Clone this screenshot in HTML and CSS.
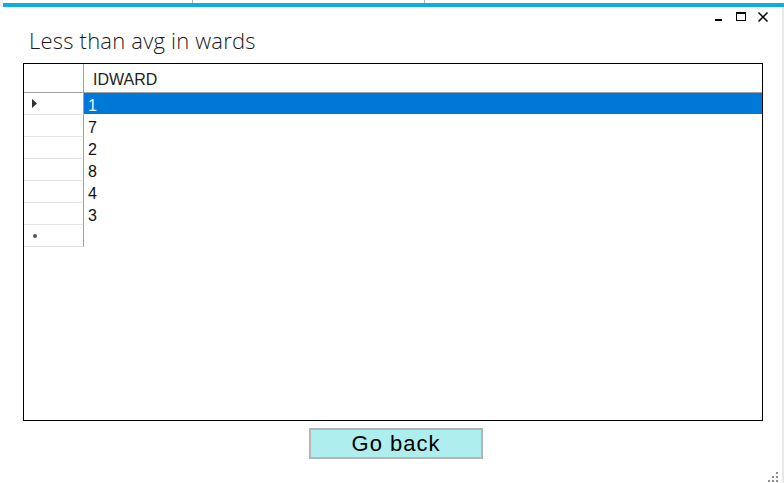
FILE: index.html
```html
<!DOCTYPE html>
<html>
<head>
<meta charset="utf-8">
<link rel="stylesheet" href="styles.css">
</head>
<body>
<div class="screen">
  <div class="topstrip"></div>
  <div class="titlebar"></div>
  <div class="frame">
    <div class="window">
      <div class="controls">
        <svg class="ctl" width="12" height="12" viewBox="0 0 12 12"><rect x="2" y="8" width="7" height="2" fill="#000"/></svg>
        <svg class="ctl" width="12" height="12" viewBox="0 0 12 12"><rect x="1.5" y="1.5" width="9" height="8" fill="none" stroke="#000" stroke-width="1"/><rect x="1" y="1" width="10" height="2" fill="#000"/></svg>
        <svg class="ctl" width="12" height="12" viewBox="0 0 12 12"><path d="M1.5 1.5 L10.5 10.5 M10.5 1.5 L1.5 10.5" stroke="#000" stroke-width="1.5"/></svg>
      </div>
      <h1 class="title">Less than avg in wards</h1>
      <div class="grid">
        <div class="row head">
          <div class="rh"></div>
          <div class="cell">IDWARD</div>
        </div>
        <div class="row selected">
          <div class="rh"><svg width="6" height="9" viewBox="0 0 6 9"><path d="M0 0 L5 4.5 L0 9 Z" fill="#333"/></svg></div>
          <div class="cell">1</div>
        </div>
        <div class="row"><div class="rh"></div><div class="cell">7</div></div>
        <div class="row"><div class="rh"></div><div class="cell">2</div></div>
        <div class="row"><div class="rh"></div><div class="cell">8</div></div>
        <div class="row"><div class="rh"></div><div class="cell">4</div></div>
        <div class="row"><div class="rh"></div><div class="cell">3</div></div>
        <div class="row newrow"><div class="rh"><span class="dot"></span></div><div class="cell"></div></div>
      </div>
      <div class="actions">
        <button class="btn">Go back</button>
      </div>
      <div class="grip">
        <svg width="12" height="12" viewBox="0 0 12 12" fill="#8f8f8f">
          <rect x="9" y="1" width="2" height="2"/>
          <rect x="5" y="5" width="2" height="2"/><rect x="9" y="5" width="2" height="2"/>
          <rect x="1" y="9" width="2" height="2"/><rect x="5" y="9" width="2" height="2"/><rect x="9" y="9" width="2" height="2"/>
        </svg>
      </div>
    </div>
    <div class="edge"></div>
  </div>
</div>
</body>
</html>
```
FILE: styles.css
```css
html, body {
  margin: 0;
  padding: 0;
  background: #ffffff;
}
.screen {
  width: 784px;
  height: 483px;
  overflow: hidden;
  display: flex;
  flex-direction: column;
  background:
    linear-gradient(#f0f0f0, #f0f0f0) 0 0 / 3px 15px no-repeat,
    #ffffff;
}
.topstrip {
  height: 3px;
  background:
    linear-gradient(#b5b5b5, #b5b5b5) 192px 0 / 1px 3px no-repeat,
    linear-gradient(#b5b5b5, #b5b5b5) 424px 0 / 1px 3px no-repeat;
}
.titlebar {
  height: 5px;
  margin-left: 3px;
  background: #0aaedc;
}
.frame {
  flex: 1;
  display: flex;
}
.window {
  flex: 1;
  display: flex;
  flex-direction: column;
  background: #ffffff;
}
.edge {
  width: 2px;
  background: #e8e8e8;
}
.controls {
  height: 21px;
  display: flex;
  justify-content: flex-end;
  align-items: flex-start;
  gap: 10px;
  padding: 4px 13px 0 0;
  box-sizing: border-box;
}
.ctl { display: block; }
.title {
  margin: 0;
  height: 35px;
  padding-left: 29px;
  font-family: "Open Sans", sans-serif;
  font-weight: 300;
  font-size: 22px;
  letter-spacing: 0.2px;
  line-height: 24px;
  color: #1a1a1a;
}
.grid {
  margin-left: 23px;
  width: 740px;
  height: 358px;
  border: 1px solid #000;
  box-sizing: border-box;
  font-family: "Liberation Sans", sans-serif;
  display: flex;
  flex-direction: column;
}
.row {
  display: flex;
  height: 22px;
}
.rh {
  width: 60px;
  box-sizing: border-box;
  border-right: 1px solid #a0a0a0;
  border-bottom: 1px solid #e3e3e3;
  display: flex;
  align-items: center;
  padding-left: 8px;
}
.cell {
  flex: 1;
  box-sizing: border-box;
  padding: 4px 0 0 4px;
  font-size: 16px;
  line-height: 17px;
  color: #111;
  border-bottom: 1px solid transparent;
}
.head {
  height: 29px;
}
.head .rh {
  border-bottom: 1px solid #a0a0a0;
}
.head .cell {
  border-bottom: 1px solid #a0a0a0;
  font-size: 16px;
  padding: 7px 0 0 9px;
  color: #222;
}
.selected .cell {
  background: #0078d7;
  background-clip: padding-box;
  color: #e8f4ff;
}
.dot {
  width: 4px;
  height: 4px;
  border-radius: 50%;
  background: #555;
  margin-left: 1px;
}
.actions {
  padding: 7px 0 0 309px;
}
.btn {
  width: 174px;
  height: 31px;
  box-sizing: border-box;
  border: 2px solid #b4b4b4;
  background: #afeeee;
  font-family: "Liberation Sans", sans-serif;
  font-size: 22px;
  letter-spacing: 1px;
  color: #000;
  padding: 0;
  margin: 0;
}
.grip {
  display: flex;
  justify-content: flex-end;
  padding: 12px 3px 0 0;
}
```
